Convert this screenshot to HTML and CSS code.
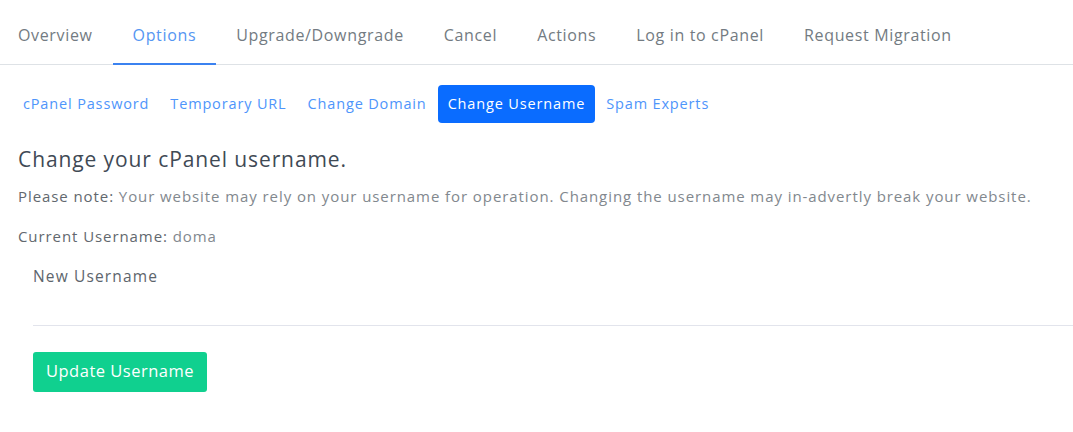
FILE: index.html
```html
<!DOCTYPE html>
<html>
<head>
    <title>Manage Product</title>
    <meta name="viewport" content="width=device-width, initial-scale=1">
    <link rel="stylesheet" href="styles.css">
</head>
<body>
    <ul class="tabs">
        <li><a href="#">Overview</a></li>
        <li><a href="#" class="active">Options</a></li>
        <li><a href="#">Upgrade/Downgrade</a></li>
        <li><a href="#">Cancel</a></li>
        <li><a href="#">Actions</a></li>
        <li><a href="#">Log in to cPanel</a></li>
        <li><a href="#">Request Migration</a></li>
    </ul>

    <div class="content">
        <ul class="pills">
            <li><a href="#">cPanel Password</a></li>
            <li><a href="#">Temporary URL</a></li>
            <li><a href="#">Change Domain</a></li>
            <li><a href="#" class="active">Change Username</a></li>
            <li><a href="#">Spam Experts</a></li>
        </ul>

        <h4 class="title">Change your cPanel username.</h4>
        <p class="text"><span class="strong">Please note:</span> Your website may rely on your username for operation. Changing the username may in-advertly break your website.</p>
        <p class="text"><span class="strong">Current Username:</span> doma</p>

        <form class="form">
            <label class="label" for="newUsername">New Username</label>
            <input class="input" type="text" id="newUsername">
            <button class="btn" type="button">Update Username</button>
        </form>
    </div>
</body>
</html>
```

FILE: styles.css
```css
body {
    margin: 0;
    font-family: 'Open Sans', sans-serif;
    background-color: #ffffff;
    color: #6c757d;
    overflow: hidden;
}
ul {
    list-style: none;
    margin: 0;
    padding: 0;
}
a {
    text-decoration: none;
}
.tabs {
    display: flex;
    margin-left: -2px;
    border-bottom: 1px solid #dee2e6;
    padding-top: 15px;
}
.tabs a {
    display: block;
    padding: 9px 20px 17px 20px;
    font-size: 16px;
    line-height: 22px;
    letter-spacing: 0.65px;
    color: #737b82;
    border-bottom: 2px solid transparent;
    margin-bottom: -1px;
}
.tabs a.active {
    color: #5596f2;
    border-bottom-color: #3b82f0;
}
.content {
    padding: 20px 0 0 18px;
}
.pills {
    display: flex;
    gap: 1px;
    margin-left: -5px;
}
.pills a {
    display: block;
    padding: 0 10px;
    height: 38px;
    line-height: 38px;
    font-size: 14.5px;
    letter-spacing: 0.85px;
    color: #4e95fb;
    border-radius: 4px;
}
.pills a.active {
    background-color: #0a6cff;
    color: #ffffff;
}
.title {
    margin: 22px 0 0 0;
    font-size: 21px;
    font-weight: 400;
    letter-spacing: 0.9px;
    color: #3f4a55;
    line-height: 28px;
}
.text {
    margin: 10px 0 0 0;
    font-size: 15px;
    line-height: 26px;
    letter-spacing: 0.92px;
    color: #82888e;
}
.text + .text {
    margin-top: 14px;
}
.strong {
    color: #62686e;
}
.form {
    padding: 15px 0 0 15px;
}
.label {
    display: block;
    font-size: 15.5px;
    line-height: 24px;
    letter-spacing: 1.15px;
    color: #5d656c;
}
.input {
    display: block;
    width: 100%;
    height: 27px;
    margin-top: 11px;
    border: none;
    border-bottom: 1px solid #e2e4ec;
    box-sizing: border-box;
    outline: none;
}
.btn {
    display: block;
    margin-top: 26px;
    height: 40px;
    padding: 0 13px 3px 13px;
    font-family: 'Open Sans', sans-serif;
    font-size: 16.5px;
    letter-spacing: 0.5px;
    color: #ffffff;
    background-color: #10d08f;
    border: none;
    border-radius: 3px;
}
```
